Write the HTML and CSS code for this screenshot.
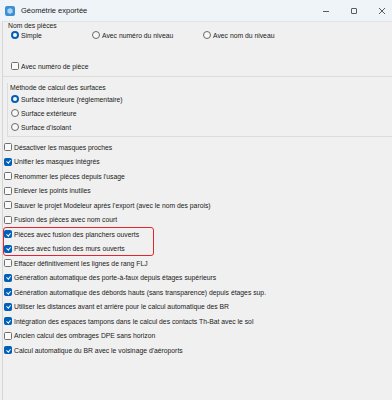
FILE: index.html
```html
<!DOCTYPE html>
<html lang="fr">
<head>
    <meta charset="UTF-8">
    <meta name="viewport" content="width=device-width, initial-scale=1.0">
    <title>Géométrie exportée</title>
    <link rel="stylesheet" href="styles.css">
</head>
<body>
    <div class="titlebar">
        <svg class="app-icon" width="10" height="10" viewBox="0 0 10 10">
            <rect x="0" y="0" width="10" height="10" rx="2" fill="#3f8fd2"/>
            <polygon points="5,2 7.6,3.5 7.6,6.5 5,8 2.4,6.5 2.4,3.5" fill="#a9d4f5"/>
        </svg>
        <span class="title">Géométrie exportée</span>
        <div class="controls">
            <svg width="8" height="8" viewBox="0 0 8 8"><line x1="1" y1="4.5" x2="7" y2="4.5" stroke="#333" stroke-width="0.8"/></svg>
            <svg width="8" height="8" viewBox="0 0 8 8"><rect x="1.5" y="1.5" width="5" height="5" rx="0.5" fill="none" stroke="#333" stroke-width="0.8"/></svg>
            <svg width="8" height="8" viewBox="0 0 8 8"><path d="M1 1 L7 7 M7 1 L1 7" stroke="#333" stroke-width="0.8"/></svg>
        </div>
    </div>

    <div class="window-body">
        <div class="group-names">
            <div class="group-label">Nom des pièces</div>
            <div class="radio-row">
                <label class="opt"><span class="radio on"></span>Simple</label>
                <label class="opt"><span class="radio"></span>Avec numéro du niveau</label>
                <label class="opt"><span class="radio"></span>Avec nom du niveau</label>
            </div>
            <label class="opt piece-num"><span class="box"></span>Avec numéro de pièce</label>
        </div>

        <div class="group-surface">
            <div class="group-label">Méthode de calcul des surfaces</div>
            <label class="opt surf-row"><span class="radio on"></span>Surface intérieure (réglementaire)</label>
            <label class="opt surf-row"><span class="radio"></span>Surface extérieure</label>
            <label class="opt surf-row"><span class="radio"></span>Surface d'isolant</label>
        </div>

        <div class="checks">
            <label class="opt check-row"><span class="box"></span>Désactiver les masques proches</label>
            <label class="opt check-row"><span class="box on"></span>Unifier les masques intégrés</label>
            <label class="opt check-row"><span class="box"></span>Renommer les pièces depuis l'usage</label>
            <label class="opt check-row"><span class="box"></span>Enlever les points inutiles</label>
            <label class="opt check-row"><span class="box"></span>Sauver le projet Modeleur après l'export (avec le nom des parois)</label>
            <label class="opt check-row"><span class="box"></span>Fusion des pièces avec nom court</label>
            <div class="highlight">
                <label class="opt check-row"><span class="box on"></span>Pièces avec fusion des planchers ouverts</label>
                <label class="opt check-row"><span class="box on"></span>Pièces avec fusion des murs ouverts</label>
            </div>
            <label class="opt check-row"><span class="box"></span>Effacer définitivement les lignes de rang FLJ</label>
            <label class="opt check-row"><span class="box on"></span>Génération automatique des porte-à-faux depuis étages supérieurs</label>
            <label class="opt check-row"><span class="box on"></span>Génération automatique des débords hauts (sans transparence) depuis étages sup.</label>
            <label class="opt check-row"><span class="box on"></span>Utiliser les distances avant et arrière pour le calcul automatique des BR</label>
            <label class="opt check-row"><span class="box on"></span>Intégration des espaces tampons dans le calcul des contacts Th-Bat avec le sol</label>
            <label class="opt check-row"><span class="box"></span>Ancien calcul des ombrages DPE sans horizon</label>
            <label class="opt check-row"><span class="box on"></span>Calcul automatique du BR avec le voisinage d'aéroports</label>
        </div>
    </div>
</body>
</html>
```

FILE: styles.css
```css
body {
    margin: 0;
    background: #f0f0f0;
    font-family: "Liberation Sans", Arial, sans-serif;
    font-size: 6.8px;
    color: #1a1a1a;
    height: 400px;
    overflow: hidden;
}
.titlebar {
    height: 21px;
    display: flex;
    align-items: center;
    background: #eff4f9;
    padding-left: 5px;
}
.app-icon {
    display: block;
}
.title {
    font-size: 7.5px;
    margin-left: 6px;
    color: #1a1a1a;
}
.controls {
    margin-left: auto;
    display: flex;
    gap: 20px;
    padding-right: 6px;
}
.controls svg {
    display: block;
}
.window-body {
    margin-left: 2px;
    border-left: 1px solid #d6d6d6;
    border-top: 1px solid #e2e2e2;
    height: 379px;
    box-sizing: border-box;
}
.group-names {
    padding: 0 0 5px 5px;
    border-bottom: 1px solid #dcdcdc;
}
.group-label {
    height: 8px;
    line-height: 8px;
}
.radio-row {
    display: grid;
    grid-template-columns: 81px 111px auto;
    height: 10px;
    padding-left: 3px;
}
.opt {
    display: flex;
    align-items: center;
    gap: 2px;
    white-space: nowrap;
}
.piece-num {
    height: 10px;
    margin-top: 21px;
    padding-left: 3px;
}
.radio {
    width: 8px;
    height: 8px;
    box-sizing: border-box;
    border-radius: 50%;
    border: 1px solid #6a6a6a;
    background: #f7f7f7;
    flex: none;
}
.radio.on {
    border: 2.4px solid #005fb8;
    background: #fff;
}
.box {
    width: 8px;
    height: 8px;
    box-sizing: border-box;
    border: 1px solid #6f6f6f;
    border-radius: 1.5px;
    background: #f9f9f9;
    flex: none;
    position: relative;
}
.box.on {
    background: #005fb8;
    border-color: #005fb8;
}
.box.on::after {
    content: "";
    position: absolute;
    left: 2px;
    top: 0.6px;
    width: 1.6px;
    height: 3.4px;
    border-right: 0.8px solid #fff;
    border-bottom: 0.8px solid #fff;
    transform: rotate(40deg);
}
.group-surface {
    margin-left: 4px;
    padding: 0 0 2px 2px;
    border-left: 1px solid #dcdcdc;
    border-bottom: 1px solid #dcdcdc;
}
.group-surface .group-label {
    margin-top: 6px;
    height: 9px;
    line-height: 9px;
}
.surf-row {
    height: 14px;
    padding-left: 1px;
}
.checks {
    padding-top: 2.75px;
    padding-left: 1px;
}
.check-row {
    height: 14.5px;
}
.highlight {
    width: 150px;
    margin-left: -1px;
    padding-left: 1px;
    outline: 1.3px solid #e0262e;
    outline-offset: -1px;
    border-radius: 3px;
}
```
